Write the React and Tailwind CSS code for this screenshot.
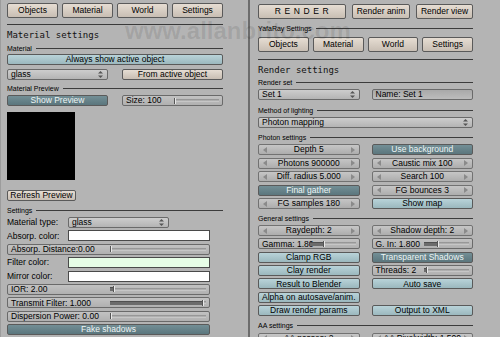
import React from "react";

const base =
  "flex items-center border border-[#5a5a5a] rounded-[2px] leading-none whitespace-nowrap text-[8.5px] overflow-hidden";

function Push({ children, className = "" }) {
  return (
    <div
      className={`${base} justify-center bg-linear-to-b from-[#e6ddd3] to-[#c8beb3] text-black ${className}`}
    >
      {children}
    </div>
  );
}

function Toggle({ children, className = "" }) {
  return (
    <div
      className={`${base} justify-center bg-linear-to-b from-[#b9d3d9] to-[#9bb8be] text-black ${className}`}
    >
      {children}
    </div>
  );
}

function Active({ children, className = "" }) {
  return (
    <div
      className={`${base} justify-center bg-linear-to-b from-[#738f96] to-[#5b767d] text-[#eef5f5] ${className}`}
    >
      {children}
    </div>
  );
}

function Arrow({ dir }) {
  return (
    <svg width="4" height="6" viewBox="0 0 4 6" className="shrink-0">
      {dir === "l" ? (
        <path d="M4 0 L0 3 L4 6 Z" fill="#8a8a8a" />
      ) : (
        <path d="M0 0 L4 3 L0 6 Z" fill="#8a8a8a" />
      )}
    </svg>
  );
}

function Num({ children, className = "" }) {
  return (
    <div
      className={`${base} border-[#727272] bg-linear-to-b from-[#c6c6c6] to-[#adadad] text-black px-[4px] ${className}`}
    >
      <Arrow dir="l" />
      <span className="flex-1 text-center">{children}</span>
      <Arrow dir="r" />
    </div>
  );
}

function UpDown() {
  return (
    <svg width="5" height="7" viewBox="0 0 5 7" className="shrink-0">
      <path d="M2.5 0 L5 2.6 L0 2.6 Z" fill="#555" />
      <path d="M2.5 7 L5 4.4 L0 4.4 Z" fill="#555" />
    </svg>
  );
}

function Drop({ children, className = "" }) {
  return (
    <div
      className={`${base} border-[#6a6a6a] bg-linear-to-b from-[#cdcdcd] to-[#b4b4b4] text-black pl-[3px] pr-[4px] ${className}`}
    >
      <span className="flex-1">{children}</span>
      <UpDown />
    </div>
  );
}

function Field({ children, className = "" }) {
  return (
    <div
      className={`${base} border-[#6a6a6a] bg-linear-to-b from-[#a9a9a9] to-[#bcbcbc] text-black pl-[3px] ${className}`}
    >
      {children}
    </div>
  );
}

function Slider({ children, pct = 0, className = "" }) {
  return (
    <div
      className={`${base} border-[#6a6a6a] bg-linear-to-b from-[#c2c2c2] to-[#b0b0b0] text-black pl-[3px] ${className}`}
    >
      <span className="w-1/2 shrink-0">{children}</span>
      <div className="flex-1 mr-[3px] h-[4px] flex items-center">
        <div
          className="h-[4px] bg-[#6c6c6c] border-t border-[#505050]"
          style={{ width: `${pct}%` }}
        />
        <div className="w-[2px] h-[6px] bg-[#e8e8e8] border-l border-[#555] shrink-0" />
        <div className="flex-1 h-[3px] bg-linear-to-b from-[#8c8c8c] to-[#d2d2d2]" />
      </div>
    </div>
  );
}

function Label({ children, className = "" }) {
  return (
    <div className={`flex items-center gap-[4px] h-[7px] text-[7px] text-black ${className}`}>
      <span className="whitespace-nowrap leading-none">{children}</span>
      <div className="flex-1 h-px bg-[#3c3c3c]" />
    </div>
  );
}

function Title({ children, className = "" }) {
  return (
    <div
      className={`h-[9px] leading-[9px] text-[9px] text-[#111] font-['DejaVu_Sans_Mono',monospace] ${className}`}
    >
      {children}
    </div>
  );
}

function Tabs({ className = "" }) {
  return (
    <div className={`grid grid-cols-4 gap-[4px] h-[15px] ${className}`}>
      <Push>Objects</Push>
      <Push>Material</Push>
      <Push>World</Push>
      <Push>Settings</Push>
    </div>
  );
}

function Swatch({ label, color }) {
  return (
    <div className="flex items-center h-[11px] text-[8.5px] leading-none">
      <span className="w-[61px] shrink-0">{label}</span>
      <div className={`flex-1 h-[11px] border border-[#4a4a4a] ${color}`} />
    </div>
  );
}

export default function App() {
  return (
    <div className="relative w-[500px] h-[337px] overflow-hidden flex bg-[#b4b4b4] font-['Liberation_Sans',Arial,sans-serif] text-black">
      {/* Left panel */}
      <div className="w-[248px] shrink-0 border-l border-[#9c9c9c] pl-[6px] pt-[3px] flex flex-col">
        <div className="w-[216px] flex flex-col">
          <Tabs />
          <div className="mt-[6px] h-px bg-[#3a3a3a]" />
          <Title className="mt-[6px]">Material settings</Title>
          <Label className="mt-[5px]">Material</Label>
          <Toggle className="mt-[2px] h-[11px]">Always show active object</Toggle>
          <div className="mt-[4px] h-[11px] grid grid-cols-2 gap-[14px]">
            <Drop>glass</Drop>
            <Push>From active object</Push>
          </div>
          <Label className="mt-[5px]">Material Preview</Label>
          <div className="mt-[3px] h-[11px] grid grid-cols-2 gap-[14px]">
            <Active>Show Preview</Active>
            <Slider pct={0}>Size: 100</Slider>
          </div>
          <div className="mt-[6px] w-[68px] h-[68px] bg-black" />
          <Push className="mt-[10px] w-[69px] h-[11px]">Refresh Preview</Push>
          <Label className="mt-[6px]">Settings</Label>
          <div className="mt-[3px] w-[203px] flex flex-col gap-[2.4px]">
            <div className="flex items-center h-[11px] text-[8.5px] leading-none">
              <span className="w-[61px] shrink-0">Material type:</span>
              <Drop className="w-[101px] h-[11px]">glass</Drop>
            </div>
            <Swatch label="Absorp. color:" color="bg-white" />
            <Slider className="h-[11px]" pct={0}>Absorp. Distance:0.00</Slider>
            <Swatch label="Filter color:" color="bg-[#e6fde6]" />
            <Swatch label="Mirror color:" color="bg-white" />
            <Slider className="h-[11px]" pct={3}>IOR: 2.00</Slider>
            <Slider className="h-[11px]" pct={96}>Transmit Filter: 1.000</Slider>
            <Slider className="h-[11px]" pct={0}>Dispersion Power: 0.00</Slider>
            <Active className="h-[11px]">Fake shadows</Active>
          </div>
        </div>
      </div>

      {/* Divider */}
      <div className="w-[2px] shrink-0 bg-[#6c6c6c]" />

      {/* Right panel */}
      <div className="flex-1 pl-[8px] pt-[4px] flex flex-col">
        <div className="w-[215px] flex flex-col">
          <div className="h-[15px] flex gap-[6px]">
            <Push className="w-[88px] tracking-[0.6px]">R E N D E R</Push>
            <Push className="w-[58px]">Render anim</Push>
            <Push className="w-[57px]">Render view</Push>
          </div>
          <Label className="mt-[6px]">YafaRay Settings</Label>
          <Tabs className="mt-[5px]" />
          <div className="mt-[7px] h-px bg-[#3a3a3a]" />
          <Title className="mt-[6px]">Render settings</Title>
          <Label className="mt-[4px]">Render set</Label>
          <div className="mt-[3px] h-[11px] grid grid-cols-2 gap-[12px]">
            <Drop>Set 1</Drop>
            <Field>Name: Set 1</Field>
          </div>
          <Label className="mt-[7px]">Method of lighting</Label>
          <Drop className="mt-[3px] h-[11px]">Photon mapping</Drop>
          <Label className="mt-[6px]">Photon settings</Label>
          <div className="mt-[3px] grid grid-cols-2 gap-x-[12px] gap-y-[2.5px] auto-rows-[11px]">
            <Num>Depth 5</Num>
            <Active>Use background</Active>
            <Num>Photons 900000</Num>
            <Num>Caustic mix 100</Num>
            <Num>Diff. radius 5.000</Num>
            <Num>Search 100</Num>
            <Active>Final gather</Active>
            <Num>FG bounces 3</Num>
            <Num>FG samples 180</Num>
            <Toggle>Show map</Toggle>
          </div>
          <Label className="mt-[5.5px]">General settings</Label>
          <div className="mt-[3.5px] grid grid-cols-2 gap-x-[12px] gap-y-[2.33px] auto-rows-[11px]">
            <Num>Raydepth: 2</Num>
            <Num>Shadow depth: 2</Num>
            <Slider pct={28}>Gamma: 1.80</Slider>
            <Slider pct={30}>G. In: 1.800</Slider>
            <Toggle>Clamp RGB</Toggle>
            <Active>Transparent Shadows</Active>
            <Toggle>Clay render</Toggle>
            <Slider pct={4}>Threads: 2</Slider>
            <Toggle>Result to Blender</Toggle>
            <Toggle>Auto save</Toggle>
            <Toggle>Alpha on autosave/anim.</Toggle>
            <div />
            <Toggle>Draw render params</Toggle>
            <Toggle>Output to XML</Toggle>
          </div>
          <Label className="mt-[6px]">AA settings</Label>
          <div className="mt-[4px] grid grid-cols-2 gap-x-[12px] auto-rows-[11px]">
            <Num>AA passes: 2</Num>
            <Num>AA Pixelwidth: 1.500</Num>
          </div>
        </div>
      </div>

      {/* Watermark */}
      <div className="pointer-events-none absolute left-[125px] top-[19px] text-[24px] leading-[24px] font-bold text-black/10 whitespace-nowrap">
        www.allanbrito.com
      </div>
    </div>
  );
}
